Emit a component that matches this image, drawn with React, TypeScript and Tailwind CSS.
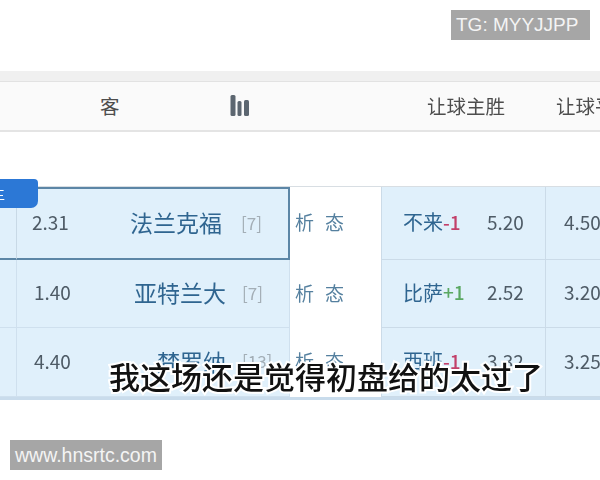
const cjk = "font-['Noto_Sans_CJK_SC','Noto_Sans',sans-serif]";

const rows = [
  { odds: "2.31", team: "法兰克福", rank: "[7]", pick: "不来", hcp: "-1", hcpColor: "text-[#c2406a]", win: "5.20", draw: "4.50", h: "h-[73px]" },
  { odds: "1.40", team: "亚特兰大", rank: "[7]", pick: "比萨", hcp: "+1", hcpColor: "text-[#5aa862]", win: "2.52", draw: "3.20", h: "h-[68px]" },
  { odds: "4.40", team: "梵罗纳", rank: "[13]", pick: "西班", hcp: "-1", hcpColor: "text-[#c2406a]", win: "3.32", draw: "3.25", h: "h-[69px]" },
];

export default function App() {
  return (
    <div className={`relative w-[600px] h-[480px] overflow-hidden bg-white ${cjk}`}>
      <div className="pt-[71px] blur-[0.5px]">
        <div className="h-[11px] bg-[#f0f0f0] border-b border-[#e2e2e2]" />
        <div className="h-[50px] bg-[#fafafa] border-b-2 border-[#e4e4e4] flex items-center text-[19.5px] text-[#4d4d4d]">
          <span className="ml-[100px] w-[130px] shrink-0">客</span>
          <svg width="20" height="22" viewBox="0 0 20 22" className="text-[#5c6670] shrink-0">
            <rect x="0.5" y="0" width="5" height="21" rx="1.5" fill="currentColor" />
            <rect x="7.5" y="6" width="4" height="15" rx="1.5" fill="currentColor" />
            <rect x="14" y="5" width="5" height="16" rx="1.5" fill="currentColor" />
          </svg>
          <span className="ml-[177px] w-[129px] shrink-0 whitespace-nowrap">让球主胜</span>
          <span className="shrink-0 whitespace-nowrap">让球平</span>
        </div>

        <div className="mt-[54px] border-t border-[#d8dee3] border-b-[3px] border-b-[#c9dcec]">
          {rows.map((r, i) => (
            <div key={r.team} className={`${r.h} grid grid-cols-[17px_273px_91px_165px_1fr]`}>
              <div className={`bg-[#e0f0fb] border-r border-[#c8d9e6] ${i === 0 ? "border-y-2 border-y-[#5c86a6]" : "border-b border-[#cfe0ee]"}`} />
              <div className={`bg-[#e0f0fb] flex items-center pl-[15px] pb-[2px] ${i === 0 ? "border-y-2 border-r-2 border-[#5c86a6]" : "border-r border-b border-[#cfe0ee]"}`}>
                <span className={`text-[19px] text-[#4e5b66] w-[97px] ${i === 0 ? "" : "pl-[2px]"}`}>{r.odds}</span>
                <span className={`text-[23px] text-[#2f6590] text-right w-[93px] whitespace-nowrap ${i === 0 ? "" : "ml-[4px]"}`}>{r.team}</span>
                <span className={`text-[17px] text-[#a3aeb6] ${i === 0 ? "ml-[19px]" : "ml-[16px]"}`}>{r.rank}</span>
              </div>
              <div className="bg-white flex items-center pl-[5px] pb-[2px] text-[19px] text-[#55809f] gap-[11px]">
                <span>析</span>
                <span>态</span>
              </div>
              <div className="bg-[#e0f0fb] border-x border-b border-[#cbdbe8] flex items-center pl-[21px] pb-[2px] text-[19px] whitespace-nowrap">
                <span className="text-[#2f6590] text-[20px]">{r.pick}</span>
                <span className={`${r.hcpColor} w-[44px] font-medium`}>{r.hcp}</span>
                <span className="text-[#4e5b66]">{r.win}</span>
              </div>
              <div className="bg-[#e0f0fb] border-b border-[#cbdbe8] flex items-center pl-[18px] pb-[2px] text-[19px] text-[#4e5b66]">
                {r.draw}
              </div>
            </div>
          ))}
        </div>
      </div>

      {/* corner tag over the first row */}
      <div className="absolute left-0 top-[179px] w-[38px] h-[29px] rounded-br-[7px] rounded-tr-[4px] bg-[#2c78d6] text-white text-[14px] leading-[29px]">
        <span className="-ml-[9px]">主</span>
      </div>

      {/* video subtitle */}
      <div className="absolute left-[109px] top-[357px] text-[31px] leading-[38px] font-medium text-[#111] whitespace-nowrap [-webkit-text-stroke:4px_white] [paint-order:stroke_fill]">
        我这场还是觉得初盘给的太过了
      </div>

      {/* watermarks */}
      <div className="absolute left-[451px] top-[10px] w-[139px] h-[30px] bg-[#a6a6a6] pl-[5px] text-[19px] leading-[30px] text-[#f4f4f4] font-['Liberation_Sans',sans-serif] whitespace-nowrap">
        TG: MYYJJPP
      </div>
      <div className="absolute left-[10px] top-[440px] w-[152px] h-[30px] bg-[#a6a6a6] pl-[5px] text-[19.5px] leading-[30px] text-[#f4f4f4] font-['Liberation_Sans',sans-serif] whitespace-nowrap">
        www.hnsrtc.com
      </div>
    </div>
  );
}
